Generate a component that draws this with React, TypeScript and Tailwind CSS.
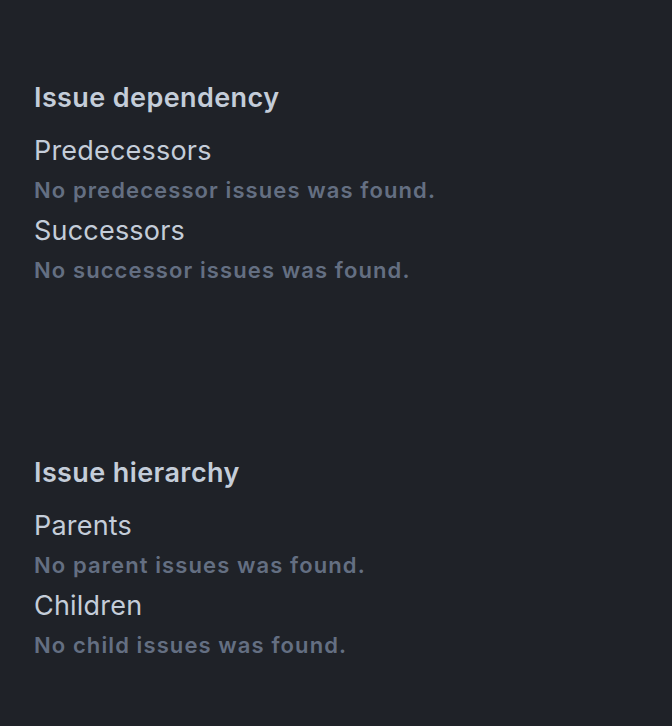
export default function App() {
  const sections = [
    {
      title: 'Issue dependency',
      groups: [
        { label: 'Predecessors', empty: 'No predecessor issues was found.' },
        { label: 'Successors', empty: 'No successor issues was found.' },
      ],
    },
    {
      title: 'Issue hierarchy',
      groups: [
        { label: 'Parents', empty: 'No parent issues was found.' },
        { label: 'Children', empty: 'No child issues was found.' },
      ],
    },
  ]

  return (
    <div className="min-h-[726px] w-[672px] bg-[#1f2228] px-[34px] pt-[80px] font-['Inter',sans-serif]">
      <div className="flex flex-col gap-[164px]">
        {sections.map((s) => (
          <section key={s.title}>
            <h2 className="h-[36px] text-[27px] leading-[36px] font-semibold tracking-[0.4px] text-[#c4cdd9]">
              {s.title}
            </h2>
            <div className="mt-[15px] flex flex-col">
              {s.groups.map((g) => (
                <div key={g.label}>
                  <div className="h-[40px] text-[27px] leading-[40px] tracking-[0.2px] text-[#c4cdd9]">
                    {g.label}
                  </div>
                  <div className="h-[40px] pb-[2px] text-[22px] leading-[38px] font-semibold tracking-[1.1px] text-[#646f82]">
                    {g.empty}
                  </div>
                </div>
              ))}
            </div>
          </section>
        ))}
      </div>
    </div>
  )
}
